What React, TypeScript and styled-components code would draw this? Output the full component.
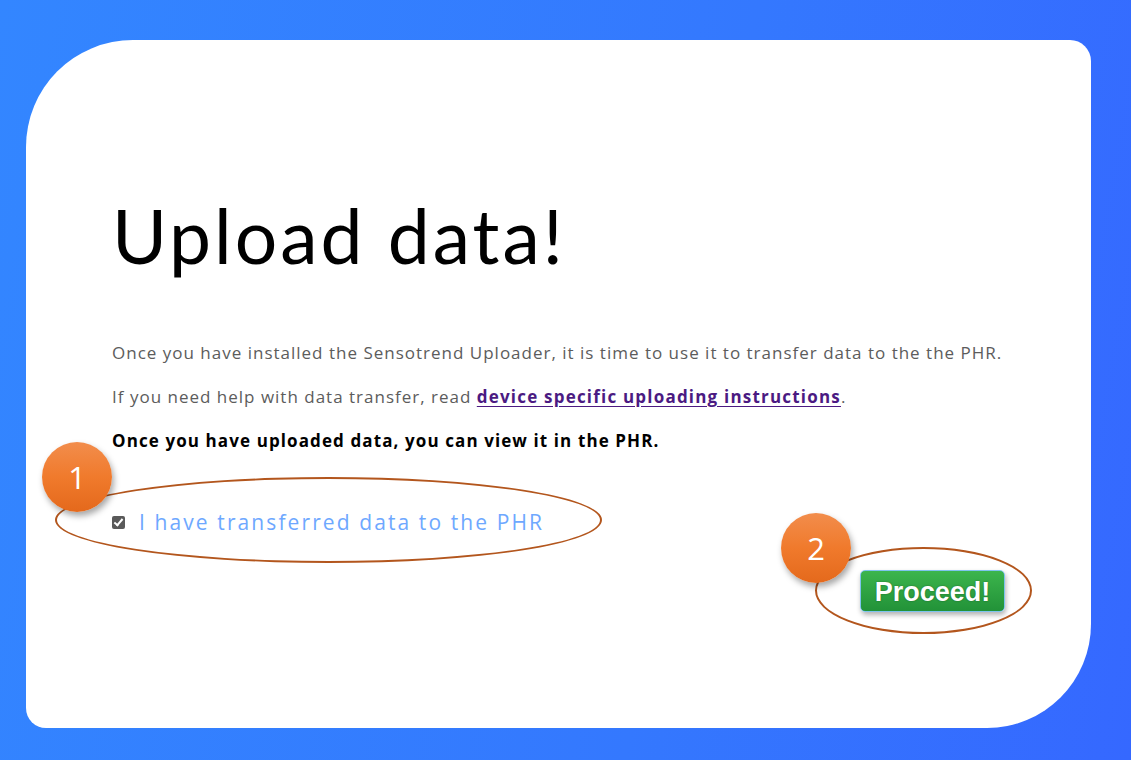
import styled, { createGlobalStyle } from "styled-components";
import { useState } from "react";

const GlobalStyle = createGlobalStyle`
    html, body {
        margin: 0;
        padding: 0;
    }
    body {
        background: linear-gradient(100deg, #3386ff 0%, #3478fe 60%, #3568ff 100%);
        font-family: "Open Sans", "Liberation Sans", sans-serif;
    }
`;

const Page = styled.div`
    position: relative;
    width: 1131px;
    height: 760px;
    padding: 40px 40px 32px 26px;
    box-sizing: border-box;
    overflow: hidden;
`;

const Card = styled.div`
    width: 1065px;
    height: 688px;
    box-sizing: border-box;
    background: #ffffff;
    border-radius: 107px 21px 104px 20px;
    padding: 150px 86px 0 86px;
    display: flex;
    flex-direction: column;
`;

const Title = styled.h1`
    margin: 0 0 60px 0;
    font-family: "Lato", "Noto Sans", sans-serif;
    font-weight: 400;
    font-size: 75px;
    line-height: 90px;
    color: #000;
    letter-spacing: 3px;
`;

const Text = styled.p<{ $bold?: boolean }>`
    margin: 0 0 18px 0;
    font-size: 17px;
    line-height: 26px;
    letter-spacing: ${(p) => (p.$bold ? "1.1px" : "1px")};
    font-weight: ${(p) => (p.$bold ? 700 : 400)};
    color: ${(p) => (p.$bold ? "#000" : "#5c5c5c")};
`;

const Link = styled.a`
    color: #4b1a82;
    font-weight: 700;
    letter-spacing: 1.2px;
    text-decoration: underline;
    text-underline-offset: 3px;
    cursor: pointer;
`;

const CheckRow = styled.label`
    display: flex;
    align-items: center;
    gap: 14px;
    margin-top: 36px;
    cursor: pointer;
`;

const CheckBox = styled.input`
    appearance: none;
    margin: 0;
    width: 13px;
    height: 13px;
    border-radius: 2px;
    background: #5a5a5a;
    position: relative;
    &:checked::after {
        content: "";
        position: absolute;
        left: 4px;
        top: 1px;
        width: 3px;
        height: 7px;
        border: solid #fff;
        border-width: 0 2px 2px 0;
        transform: rotate(40deg);
    }
`;

const CheckLabel = styled.span`
    font-size: 21px;
    font-weight: 400;
    color: #6ea8ff;
    letter-spacing: 2.1px;
`;

const Actions = styled.div`
    display: flex;
    justify-content: flex-end;
    margin-top: 34px;
`;

const ProceedButton = styled.button`
    width: 145px;
    height: 42px;
    border: 1px solid #7fc4ee;
    border-radius: 5px;
    background: linear-gradient(180deg, #3cb54c 0%, #229238 100%);
    color: #fff;
    font-family: "Liberation Sans", Arial, sans-serif;
    font-weight: 700;
    font-size: 27px;
    line-height: 40px;
    text-shadow: 0 0 2px rgba(0, 0, 0, 0.35);
    box-shadow: 1px 3px 5px rgba(0, 0, 0, 0.3);
    cursor: pointer;
    padding: 1px 0 0 0;
`;

const Ring = styled.div<{ $x: number; $y: number; $w: number; $h: number }>`
    position: absolute;
    left: ${(p) => p.$x}px;
    top: ${(p) => p.$y}px;
    width: ${(p) => p.$w}px;
    height: ${(p) => p.$h}px;
    box-sizing: border-box;
    border: 2px solid #b3561d;
    border-radius: 50%;
    pointer-events: none;
`;

const Badge = styled.div<{ $x: number; $y: number }>`
    position: absolute;
    left: ${(p) => p.$x - 35}px;
    top: ${(p) => p.$y - 35}px;
    width: 70px;
    height: 70px;
    border-radius: 50%;
    background: linear-gradient(180deg, #f28d4c 0%, #f07a2c 50%, #e4691c 100%);
    box-shadow: 2px 4px 6px rgba(0, 0, 0, 0.35);
    color: #fff;
    font-family: "Open Sans", sans-serif;
    font-size: 31px;
    display: flex;
    align-items: center;
    justify-content: center;
`;

export default function App() {
    const [done, setDone] = useState(true);

    return (
        <>
            <GlobalStyle />
            <Page>
                <Card>
                    <Title>Upload data!</Title>
                    <Text>Once you have installed the Sensotrend Uploader, it is time to use it to transfer data to the the PHR.</Text>
                    <Text>
                        If you need help with data transfer, read <Link>device specific uploading instructions</Link>.
                    </Text>
                    <Text $bold>Once you have uploaded data, you can view it in the PHR.</Text>
                    <CheckRow>
                        <CheckBox type="checkbox" checked={done} onChange={(e) => setDone(e.target.checked)} />
                        <CheckLabel>I have transferred data to the PHR</CheckLabel>
                    </CheckRow>
                    <Actions>
                        <ProceedButton>Proceed!</ProceedButton>
                    </Actions>
                </Card>
                <Ring $x={55} $y={477} $w={547} $h={86} />
                <Ring $x={815} $y={547} $w={217} $h={87} />
                <Badge $x={77} $y={477}>1</Badge>
                <Badge $x={816} $y={548}>2</Badge>
            </Page>
        </>
    );
}
